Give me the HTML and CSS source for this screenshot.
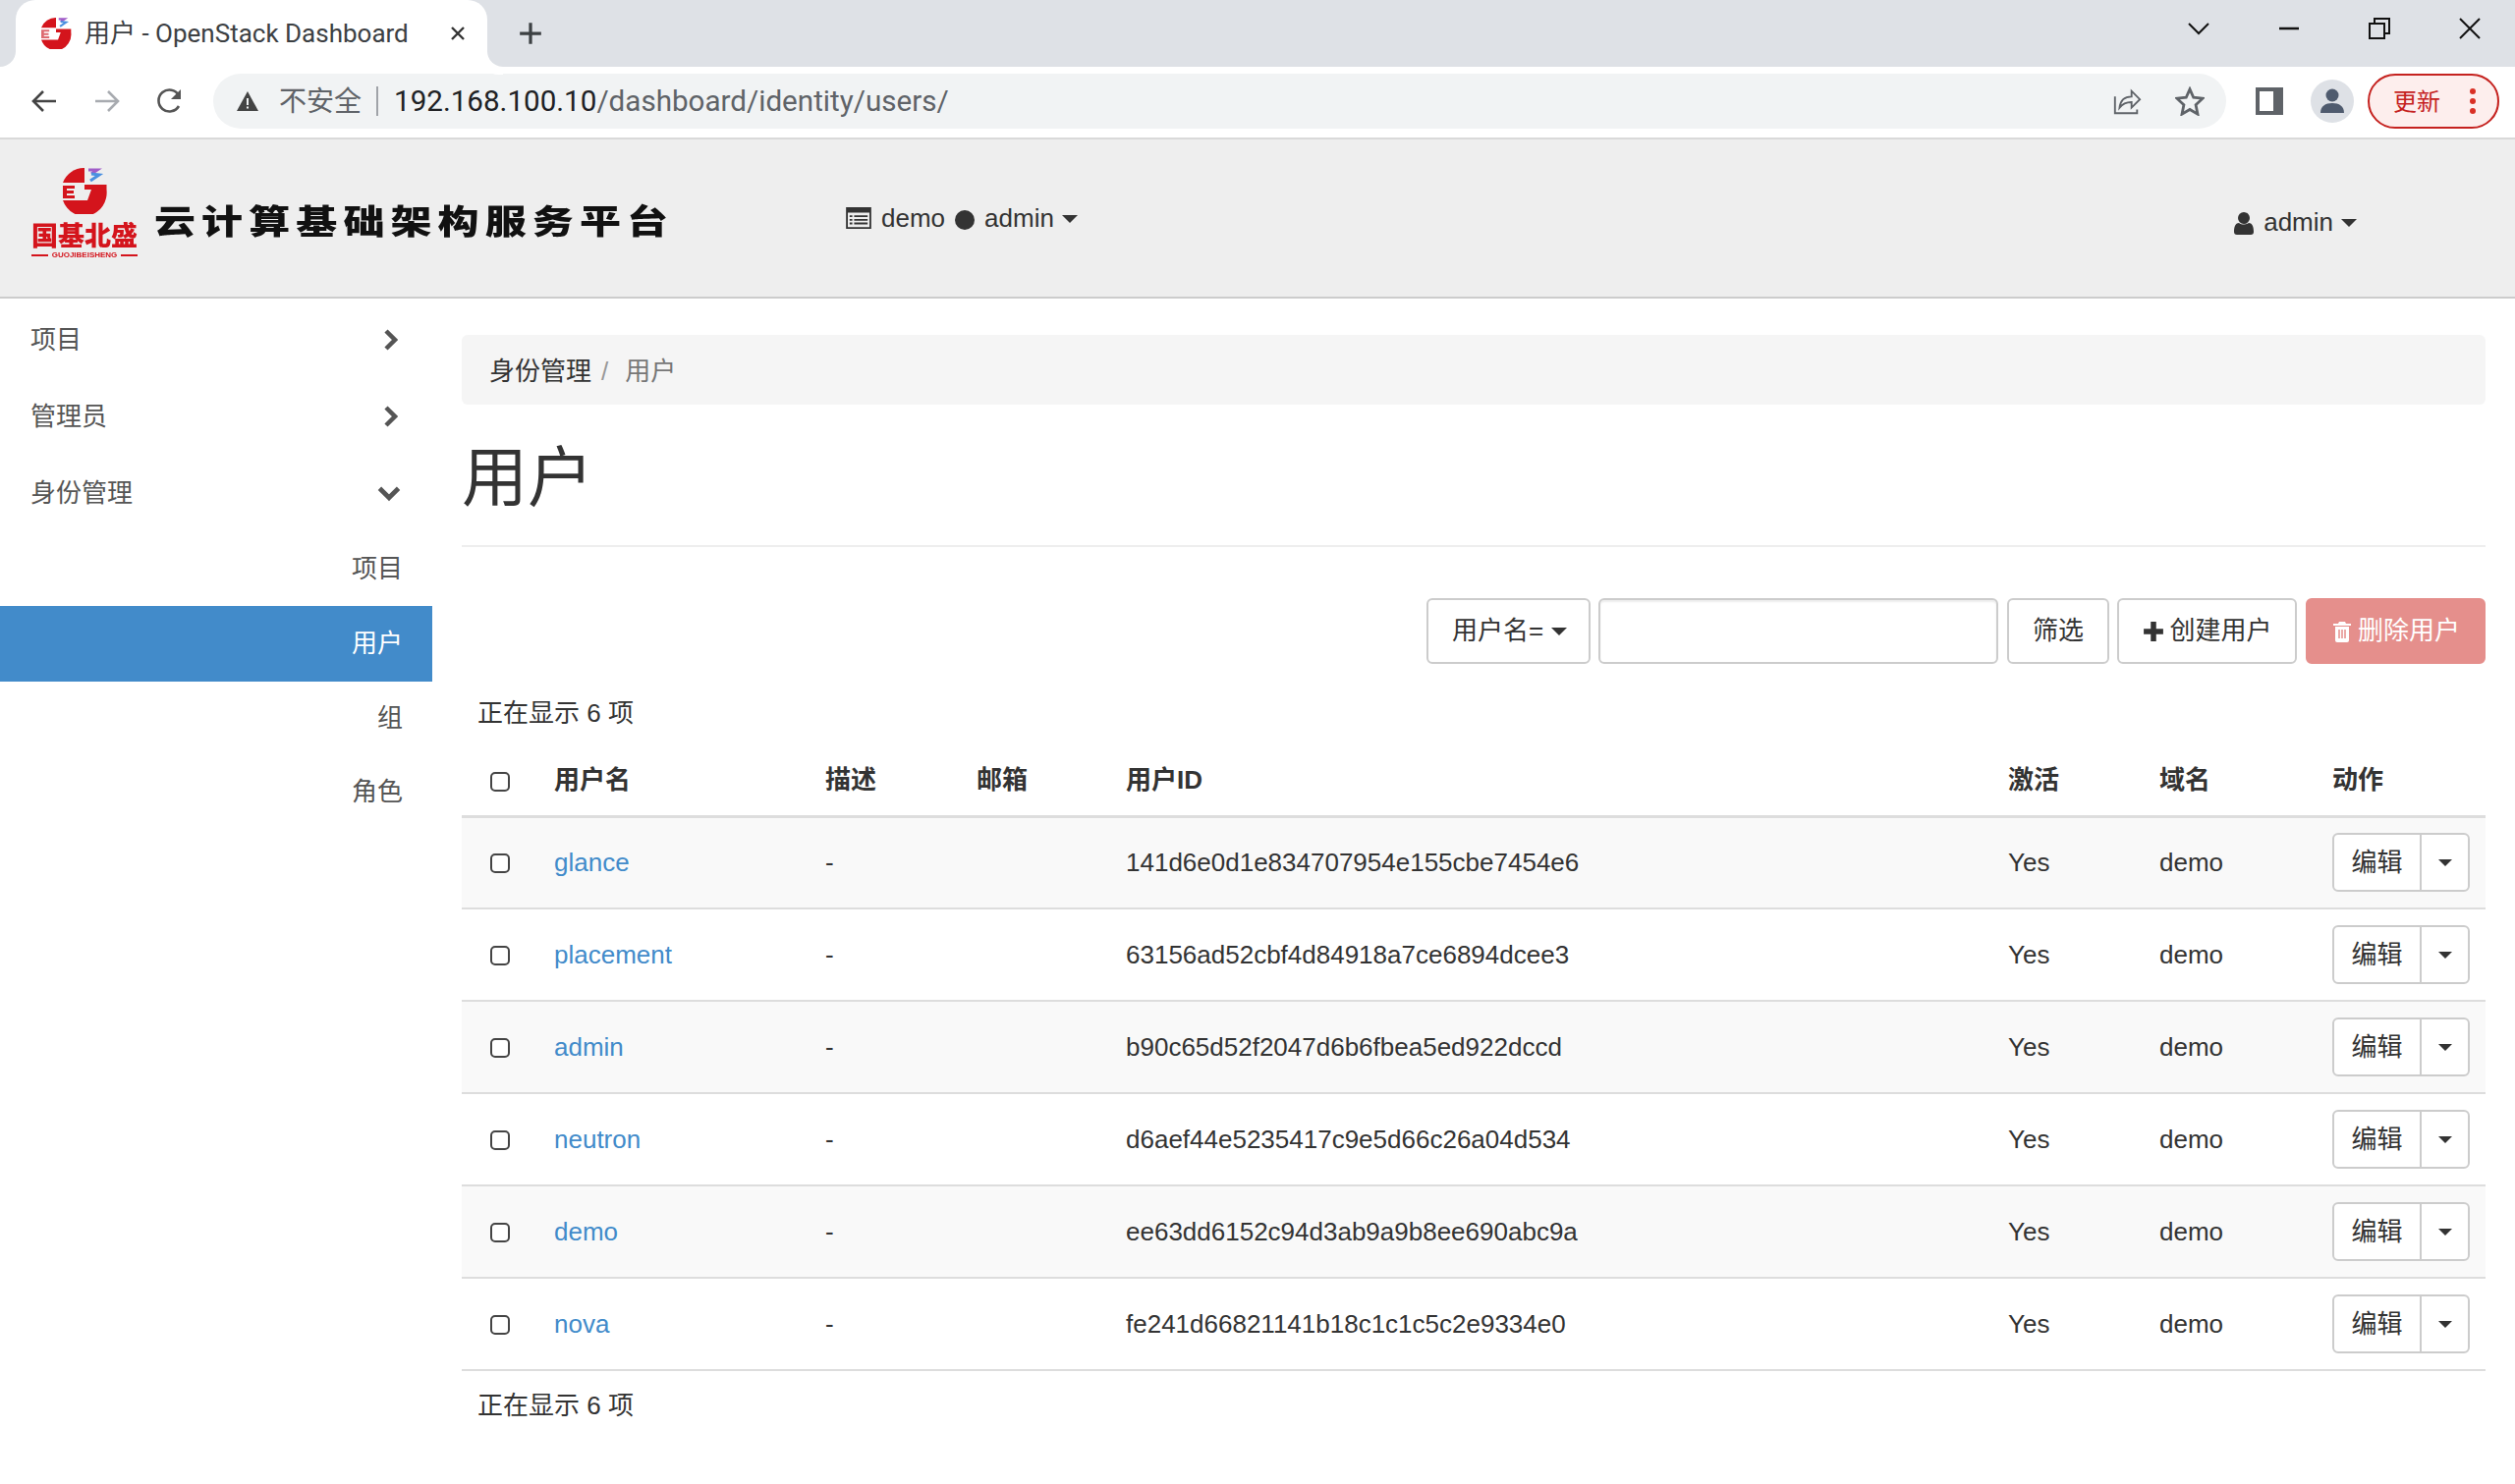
FILE: index.html
```html
<!DOCTYPE html>
<html lang="zh">
<head>
<meta charset="utf-8">
<title>用户 - OpenStack Dashboard</title>
<link rel="stylesheet" href="styles.css">
</head>
<body>
<div class="tabstrip">
  <div class="tab">
    <svg class="favicon" viewBox="0 0 46 47"><path d="M23 0A23 23 0 0 0 1 15h22z" fill="#d4141c"/><path d="M1 18h12v3H5v2h7v3H5v2h8v3H1z" fill="#dd6a70"/><path d="M23 17h22.500v5A23 24 0 0 1 1 33h25l4-11h-7z" fill="#d4141c"/><path d="M27 2h9l-6 4" fill="none" stroke="#a05cc8" stroke-width="3"/><path d="M30 6l8 1-9 6" fill="none" stroke="#4a90e0" stroke-width="3"/></svg>
    <span class="tab-title">用户 - OpenStack Dashboard</span>
    <svg class="tab-close" viewBox="0 0 16 16"><path d="M2 2l12 12M14 2L2 14" stroke="#333" stroke-width="2.400"/></svg>
  </div>
  <svg class="newtab" viewBox="0 0 24 24"><path d="M12 2v20M2 12h20" stroke="#3c4043" stroke-width="3"/></svg>
  <div class="strip-spacer"></div>
  <svg class="win chevron" viewBox="0 0 24 24"><path d="M2 7l10 10L22 7" fill="none" stroke="#111" stroke-width="2"/></svg>
  <svg class="win" viewBox="0 0 24 24"><path d="M2 12h20" stroke="#111" stroke-width="2.500"/></svg>
  <svg class="win" viewBox="0 0 24 24"><path d="M2 7h15v15H2zM7 7V2h15v15h-5" fill="none" stroke="#111" stroke-width="2"/></svg>
  <svg class="win" viewBox="0 0 24 24"><path d="M2 2l20 20M22 2L2 22" stroke="#111" stroke-width="2"/></svg>
</div>
<div class="toolbar">
  <svg class="nav" viewBox="0 0 28 28"><path d="M26 14H4M13 4L3 14l10 10" fill="none" stroke="#444" stroke-width="2.600"/></svg>
  <svg class="nav" viewBox="0 0 28 28"><path d="M2 14h22M15 4l10 10-10 10" fill="none" stroke="#a8abb0" stroke-width="2.600"/></svg>
  <svg class="nav" viewBox="0 0 28 28"><path d="M23 19a11 11 0 1 1 0-11" fill="none" stroke="#555" stroke-width="2.600"/><path d="M25 2v10H15z" fill="#555"/></svg>
  <div class="omnibox">
    <svg class="warn" viewBox="0 0 24 24"><path d="M12 2L23 22H1z" fill="#444"/><path d="M11 9h2v7h-2zM11 17.500h2v2h-2z" fill="#f1f3f4"/></svg>
    <span class="insecure">不安全</span>
    <span class="omni-divider"></span>
    <span class="url"><span class="url-host">192.168.100.10</span>/dashboard/identity/users/</span>
    <span class="strip-spacer"></span>
    <svg class="omni-icon" viewBox="0 0 32 32"><path d="M3 11v18h24v-4M8 23c1-9 7-12 13-12V5l9 9-9 9v-6c-6 0-10 2-13 6z" fill="none" stroke="#5f6368" stroke-width="2"/></svg>
    <svg class="omni-icon star" viewBox="0 0 32 32"><path d="M16 3l4 9 10 1-7.500 7 2 10L16 25l-8.500 5 2-10L2 13l10-1z" fill="none" stroke="#5f6368" stroke-width="3"/></svg>
  </div>
  <svg class="panel" viewBox="0 0 28 28"><path d="M0 0h28v28H0z" fill="#5f6368"/><path d="M4 4h14v20H4z" fill="#fff"/></svg>
  <div class="avatar"><svg viewBox="0 0 44 44"><circle cx="22" cy="16" r="6.500" fill="#4f5b6e"/><path d="M10 34c0-7 5-10 12-10s12 3 12 10z" fill="#4f5b6e"/></svg></div>
  <div class="update"><span>更新</span><span class="dots"><i></i><i></i><i></i></span></div>
</div>
<header class="banner">
  <div class="logo">
    <svg class="logo-mark" viewBox="0 0 46 47"><path d="M23 0A23 23 0 0 0 1 15h22z" fill="#d4141c"/><path d="M1 18h12v3H5v2h7v3H5v2h8v3H1z" fill="#d4141c"/><path d="M23 17h22.500v5A23 24 0 0 1 1 33h25l4-11h-7z" fill="#d4141c"/><path d="M27 2h9l-6 4" fill="none" stroke="#a05cc8" stroke-width="3"/><path d="M30 6l8 1-9 6" fill="none" stroke="#4a90e0" stroke-width="3"/></svg>
    <div class="logo-name">国基北盛</div>
    <div class="logo-sub"><i></i><span>GUOJIBEISHENG</span><i></i></div>
  </div>
  <div class="brand-title">云计算基础架构服务平台</div>
  <div class="context">
    <svg class="list-icon" viewBox="0 0 28 24"><path d="M1 1h26v22H1z" fill="#eee" stroke="#333" stroke-width="2"/><path d="M1 1h26v5H1z" fill="#333"/><path d="M4 9h3v2H4zM9 9h15v2H9zM4 13h3v2H4zM9 13h15v2H9zM4 17h3v2H4zM9 17h15v2H9z" fill="#333"/></svg>
    <span>demo</span><span class="dot"></span><span>admin</span><span class="caret"></span>
  </div>
  <div class="user-menu">
    <svg class="user-icon" viewBox="0 0 20 24"><circle cx="10" cy="7" r="6" fill="#333"/><path d="M0 21c0-6 2-9 5-9 3 2 7 2 10 0 3 0 5 3 5 9 0 2-1 3-3 3H3c-2 0-3-1-3-3z" fill="#333"/></svg>
    <span>admin</span><span class="caret"></span>
  </div>
</header>
<div class="layout">
  <nav class="sidebar">
    <div class="side-item"><span>项目</span><svg class="chev" viewBox="0 0 16 24"><path d="M4 3l9 9-9 9" fill="none" stroke="#555" stroke-width="4.500"/></svg></div>
    <div class="side-item"><span>管理员</span><svg class="chev" viewBox="0 0 16 24"><path d="M4 3l9 9-9 9" fill="none" stroke="#555" stroke-width="4.500"/></svg></div>
    <div class="side-item"><span>身份管理</span><svg class="chev-down" viewBox="0 0 24 16"><path d="M3 3l9 9 9-9" fill="none" stroke="#555" stroke-width="4.500"/></svg></div>
    <div class="side-sub">项目</div>
    <div class="side-sub active">用户</div>
    <div class="side-sub">组</div>
    <div class="side-sub">角色</div>
  </nav>
  <main class="content">
    <div class="breadcrumb"><span class="crumb">身份管理</span><span class="crumb-sep">/</span><span class="crumb-cur">用户</span></div>
    <h1 class="title">用户</h1>
    <div class="actions">
      <button class="btn filter-type">用户名=<span class="caret"></span></button>
      <input class="filter-input" type="text" aria-label="filter">
      <button class="btn">筛选</button>
      <button class="btn"><svg class="ico" viewBox="0 0 20 20"><path d="M7.500 1h5v6.500H19v5h-6.500V19h-5v-6.500H1v-5h6.500z" fill="#333"/></svg>创建用户</button>
      <button class="btn danger"><svg class="ico" viewBox="0 0 20 22"><path d="M7 1h6l1 2h5v2H1V3h5zM3 6h14v14a2 2 0 0 1-2 2H5a2 2 0 0 1-2-2z" fill="#fff"/><path d="M7 9v9M10 9v9M13 9v9" stroke="#e58f8c" stroke-width="1.500"/></svg>删除用户</button>
    </div>
    <div class="count">正在显示 6 项</div>
    <table class="users">
      <colgroup><col class="c1"><col class="c2"><col class="c3"><col class="c4"><col class="c5"><col class="c6"><col class="c7"><col class="c8"></colgroup>
      <thead>
        <tr><th class="chk"><input type="checkbox" class="cb"></th><th>用户名</th><th>描述</th><th>邮箱</th><th>用户ID</th><th>激活</th><th>域名</th><th>动作</th></tr>
      </thead>
      <tbody>
        <tr><td class="chk"><input type="checkbox" class="cb"></td><td><a href="#">glance</a></td><td>-</td><td></td><td>141d6e0d1e834707954e155cbe7454e6</td><td>Yes</td><td>demo</td><td><div class="split"><span class="split-main">编辑</span><span class="split-caret"><span class="caret small"></span></span></div></td></tr>
        <tr><td class="chk"><input type="checkbox" class="cb"></td><td><a href="#">placement</a></td><td>-</td><td></td><td>63156ad52cbf4d84918a7ce6894dcee3</td><td>Yes</td><td>demo</td><td><div class="split"><span class="split-main">编辑</span><span class="split-caret"><span class="caret small"></span></span></div></td></tr>
        <tr><td class="chk"><input type="checkbox" class="cb"></td><td><a href="#">admin</a></td><td>-</td><td></td><td>b90c65d52f2047d6b6fbea5ed922dccd</td><td>Yes</td><td>demo</td><td><div class="split"><span class="split-main">编辑</span><span class="split-caret"><span class="caret small"></span></span></div></td></tr>
        <tr><td class="chk"><input type="checkbox" class="cb"></td><td><a href="#">neutron</a></td><td>-</td><td></td><td>d6aef44e5235417c9e5d66c26a04d534</td><td>Yes</td><td>demo</td><td><div class="split"><span class="split-main">编辑</span><span class="split-caret"><span class="caret small"></span></span></div></td></tr>
        <tr><td class="chk"><input type="checkbox" class="cb"></td><td><a href="#">demo</a></td><td>-</td><td></td><td>ee63dd6152c94d3ab9a9b8ee690abc9a</td><td>Yes</td><td>demo</td><td><div class="split"><span class="split-main">编辑</span><span class="split-caret"><span class="caret small"></span></span></div></td></tr>
        <tr><td class="chk"><input type="checkbox" class="cb"></td><td><a href="#">nova</a></td><td>-</td><td></td><td>fe241d66821141b18c1c1c5c2e9334e0</td><td>Yes</td><td>demo</td><td><div class="split"><span class="split-main">编辑</span><span class="split-caret"><span class="caret small"></span></span></div></td></tr>
      </tbody>
    </table>
    <div class="count-foot">正在显示 6 项</div>
  </main>
</div>
</body>
</html>
```

FILE: styles.css
```css
* { box-sizing: border-box; }
html, body { margin: 0; padding: 0; background: #fff; }
body {
  width: 2560px; height: 1511px; overflow: hidden;
  font-family: "Liberation Sans", "Noto Sans CJK SC", sans-serif;
  font-size: 26px; color: #333; line-height: 37px;
}
/* browser chrome */
.tabstrip { height: 68px; background: #dee1e6; display: flex; align-items: center; padding-left: 16px; padding-right: 34px; }
.tab {
  position: relative; width: 480px; height: 68px; background: #fff;
  border-radius: 20px 20px 0 0; display: flex; align-items: center; padding-left: 25px;
}
.tab::before, .tab::after {
  content: ""; position: absolute; bottom: 0; width: 16px; height: 16px; background: transparent;
}
.tab::before { left: -16px; border-bottom-right-radius: 16px; box-shadow: 4px 4px 0 4px #fff; }
.tab::after { right: -16px; border-bottom-left-radius: 16px; box-shadow: -4px 4px 0 4px #fff; }
.favicon { width: 32px; height: 32px; margin-right: 13px; }
.tab-title { font-family: "Roboto", "Noto Sans CJK SC", sans-serif; font-size: 26px; color: #3c4043; white-space: nowrap; width: 360px; }
.tab-close { width: 16px; height: 16px; margin-left: 12px; }
.newtab { width: 26px; height: 26px; margin-left: 31px; }
.strip-spacer { flex: 1; }
.win { width: 24px; height: 24px; margin-left: 68px; margin-top: -10px; }
.chevron { margin-left: 0; width: 24px; height: 24px; }
.toolbar { height: 74px; background: #fff; display: flex; align-items: center; padding: 0 16px 2px 31px; border-bottom: 2px solid #d9d9d9; }
.nav { width: 28px; height: 28px; margin-right: 36px; }
.omnibox {
  width: 2049px; height: 56px; margin-left: -6px; border-radius: 28px; background: #f1f3f4;
  display: flex; align-items: center; padding: 0 22px 0 23px;
}
.warn { width: 24px; height: 24px; margin-right: 20px; }
.insecure { font-size: 28px; color: #5f6368; }
.omni-divider { width: 2px; height: 30px; background: #a0a3a8; margin: 0 16px 0 15px; }
.url { font-family: "Roboto", sans-serif; font-size: 29.600px; color: #5f6368; white-space: nowrap; padding-top: 1px; }
.url-host { color: #202124; }
.omni-icon { width: 30px; height: 30px; margin-left: 34px; }
.panel { width: 28px; height: 28px; margin-left: 30px; }
.avatar { width: 44px; height: 44px; margin-left: 28px; border-radius: 50%; background: #dee1e6; }
.avatar svg { display: block; width: 44px; height: 44px; }
.update {
  width: 134px; height: 56px; margin-left: 14px; border: 2px solid #c5221f; border-radius: 28px; background: #fdeeed;
  color: #c5221f; font-size: 24px; display: flex; align-items: center; padding-left: 24px; justify-content: space-between; padding-right: 22px;
}
.dots { display: flex; flex-direction: column; gap: 4px; }
.dots i { display: block; width: 6px; height: 6px; border-radius: 50%; background: #d93025; }
/* page banner */
.banner { height: 162px; background: #eee; border-bottom: 2px solid #ccc; display: flex; align-items: flex-start; }
.logo { width: 108px; margin-left: 32px; margin-top: 29px; display: flex; flex-direction: column; align-items: center; filter: blur(.4px); }
.logo-mark { width: 46px; height: 47px; display: block; }
.logo-name { font-size: 27px; line-height: 28px; font-weight: 900; color: #d4141c; margin-top: 7px; white-space: nowrap; font-family: "Noto Sans CJK SC", sans-serif; }
.logo-sub { width: 108px; display: flex; align-items: center; gap: 4px; margin-top: 2px; color: #d4141c; font-size: 8px; line-height: 9px; font-weight: 700; }
.logo-sub i { flex: 1; height: 2px; background: #d4141c; }
.brand-title {
  margin-left: 17px; margin-top: 56px; font-family: "Noto Sans CJK SC", sans-serif; font-weight: 900; color: #111;
  font-size: 42px; line-height: 50px; letter-spacing: 6.100px; white-space: nowrap; width: 695px;
  transform: scaleY(.82); filter: blur(.6px);
}
.context { margin-top: 62px; display: flex; align-items: center; margin-left: 9px; }
.list-icon { width: 26px; height: 22px; margin-right: 10px; margin-top: -2px; }
.dot { width: 20px; height: 20px; border-radius: 50%; background: #333; margin: 2px 10px 0; }
.caret { display: inline-block; border-top: 8px solid #333; border-left: 8px solid transparent; border-right: 8px solid transparent; margin-left: 8px; }
.caret.small { border-top-width: 7px; border-left-width: 7px; border-right-width: 7px; margin-left: 6px; vertical-align: middle; }
.user-menu { margin-top: 66px; margin-left: auto; margin-right: 161px; display: flex; align-items: center; }
.user-icon { width: 20px; height: 24px; margin-right: 10px; }
/* main layout */
.layout { display: flex; }
.sidebar { width: 440px; padding-top: 3px; color: #555; flex: none; }
.side-item { height: 78.300px; display: flex; align-items: center; justify-content: space-between; padding: 0 30px 0 31px; }
.chev { width: 16px; height: 24px; margin-right: 5px; }
.chev-down { width: 26px; height: 17px; margin-right: 1px; }
.side-sub { height: 75px; display: flex; align-items: center; justify-content: flex-end; padding-right: 30px; }
.side-sub.active { height: 77px; background: #428bca; color: #fff; }
.content { width: 2060px; margin-left: 30px; }
.breadcrumb { margin-top: 37px; height: 71px; background: #f5f5f5; border-radius: 6px; display: flex; align-items: center; padding: 3px 0 0 28px; }
.crumb-sep { color: #999; margin: 0 17px 0 10px; }
.crumb-cur { color: #777; }
.title { margin: 0; height: 145px; border-bottom: 2px solid #eee; font-size: 67px; font-weight: 400; line-height: 150px; }
.actions { margin-top: 52px; height: 67px; display: flex; justify-content: flex-end; gap: 8.500px; }
.btn {
  height: 67px; font: inherit; color: #333; background: #fff; border: 2px solid #ccc; border-radius: 6px; padding: 0 24px;
  display: flex; align-items: center; white-space: nowrap;
}
.filter-type { width: 167px; padding: 0 0 0 24px; }
.filter-input { width: 407px; height: 67px; border: 2px solid #ccc; border-radius: 6px; box-shadow: inset 0 2px 2px rgba(0,0,0,.08); background: #fff; }
.btn .ico { width: 22px; height: 22px; margin-right: 5px; }
.btn.danger { background: #e58f8c; border-color: #e58f8c; color: #fff; }
.count { height: 81px; padding: 32px 0 0 16px; }
.users { width: 2060px; border-collapse: collapse; table-layout: fixed; }
.c1 { width: 78px; } .c2 { width: 276px; } .c3 { width: 154px; } .c4 { width: 152px; }
.c5 { width: 898px; } .c6 { width: 154px; } .c7 { width: 176px; } .c8 { width: 172px; }
.users th { height: 74px; text-align: left; padding: 3px 0 0 16px; border-bottom: 3px solid #ddd; font-weight: 700; }
.users td { height: 94px; padding: 0 0 0 16px; border-bottom: 2px solid #ddd; }
.users tbody tr:nth-child(odd) { background: #f9f9f9; }
.users .chk { padding-left: 29px; }
.users a { color: #428bca; text-decoration: none; }
.cb { appearance: none; display: block; width: 20px; height: 20px; margin: 2px 0 0; border: 2px solid #444; border-radius: 5px; background: #fff; }
.split { display: flex; width: 140px; height: 60px; background: #fff; border: 2px solid #ccc; border-radius: 6px; }
.split-main { width: 89px; text-align: center; line-height: 56px; border-right: 2px solid #ccc; }
.split-caret { flex: 1; display: flex; align-items: center; justify-content: center; }
.split-caret .caret { margin-left: 0; }
.count-foot { height: 70px; padding: 17px 0 0 16px; }
```
